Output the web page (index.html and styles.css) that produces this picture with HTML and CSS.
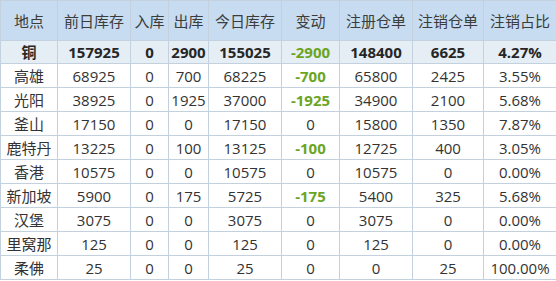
FILE: index.html
```html
<!DOCTYPE html>
<html lang="zh">
<head>
    <meta charset="UTF-8">
    <title>库存</title>
    <link rel="stylesheet" href="styles.css">
</head>
<body>
<table class="stock-table">
    <colgroup>
        <col class="c-place">
        <col class="c-wide">
        <col class="c-in">
        <col class="c-out">
        <col class="c-wide">
        <col class="c-change">
        <col class="c-wide">
        <col class="c-cancel">
        <col class="c-ratio">
    </colgroup>
    <thead>
        <tr>
            <th>地点</th><th>前日库存</th><th>入库</th><th>出库</th><th>今日库存</th>
            <th>变动</th><th>注册仓单</th><th>注销仓单</th><th>注销占比</th>
        </tr>
    </thead>
    <tbody>
        <tr class="total">
            <td>铜</td><td>157925</td><td>0</td><td>2900</td><td>155025</td>
            <td class="down">-2900</td><td>148400</td><td>6625</td><td>4.27%</td>
        </tr>
        <tr>
            <td>高雄</td><td>68925</td><td>0</td><td>700</td><td>68225</td>
            <td class="down">-700</td><td>65800</td><td>2425</td><td>3.55%</td>
        </tr>
        <tr>
            <td>光阳</td><td>38925</td><td>0</td><td>1925</td><td>37000</td>
            <td class="down">-1925</td><td>34900</td><td>2100</td><td>5.68%</td>
        </tr>
        <tr>
            <td>釜山</td><td>17150</td><td>0</td><td>0</td><td>17150</td>
            <td>0</td><td>15800</td><td>1350</td><td>7.87%</td>
        </tr>
        <tr>
            <td>鹿特丹</td><td>13225</td><td>0</td><td>100</td><td>13125</td>
            <td class="down">-100</td><td>12725</td><td>400</td><td>3.05%</td>
        </tr>
        <tr>
            <td>香港</td><td>10575</td><td>0</td><td>0</td><td>10575</td>
            <td>0</td><td>10575</td><td>0</td><td>0.00%</td>
        </tr>
        <tr>
            <td>新加坡</td><td>5900</td><td>0</td><td>175</td><td>5725</td>
            <td class="down">-175</td><td>5400</td><td>325</td><td>5.68%</td>
        </tr>
        <tr>
            <td>汉堡</td><td>3075</td><td>0</td><td>0</td><td>3075</td>
            <td>0</td><td>3075</td><td>0</td><td>0.00%</td>
        </tr>
        <tr>
            <td>里窝那</td><td>125</td><td>0</td><td>0</td><td>125</td>
            <td>0</td><td>125</td><td>0</td><td>0.00%</td>
        </tr>
        <tr>
            <td>柔佛</td><td>25</td><td>0</td><td>0</td><td>25</td>
            <td>0</td><td>0</td><td>25</td><td>100.00%</td>
        </tr>
    </tbody>
</table>
</body>
</html>
```

FILE: styles.css
```css
:root {
    --line: #c3d0dd;
    --head-bg: #c7dcf0;
    --total-bg: #e5edf5;
    --text: #333;
    --green: #6ba51f;
}
body {
    margin: 0;
    background: #fff;
    font-family: "Open Sans", "Noto Sans CJK SC", sans-serif;
    color: var(--text);
}
.stock-table {
    border-collapse: collapse;
    table-layout: fixed;
    width: 556px;
    font-size: 15px;
}
.c-place { width: 57px; }
.c-wide { width: 73px; }
.c-in { width: 38px; }
.c-out { width: 40px; }
.c-change { width: 58px; }
.c-cancel { width: 71px; }
.c-ratio { width: 73px; }
.stock-table th,
.stock-table td {
    border: 1px solid var(--line);
    text-align: center;
    padding: 0;
    white-space: nowrap;
    overflow: hidden;
}
.stock-table th {
    height: 39px;
    background: var(--head-bg);
    font-weight: normal;
    color: #3c3c3c;
}
.stock-table td {
    height: 23px;
    line-height: 22px;
}
.total td {
    background: var(--total-bg);
    font-weight: bold;
    color: #262626;
    height: 22px;
}
.stock-table td.down {
    color: var(--green);
    font-weight: bold;
}
```
